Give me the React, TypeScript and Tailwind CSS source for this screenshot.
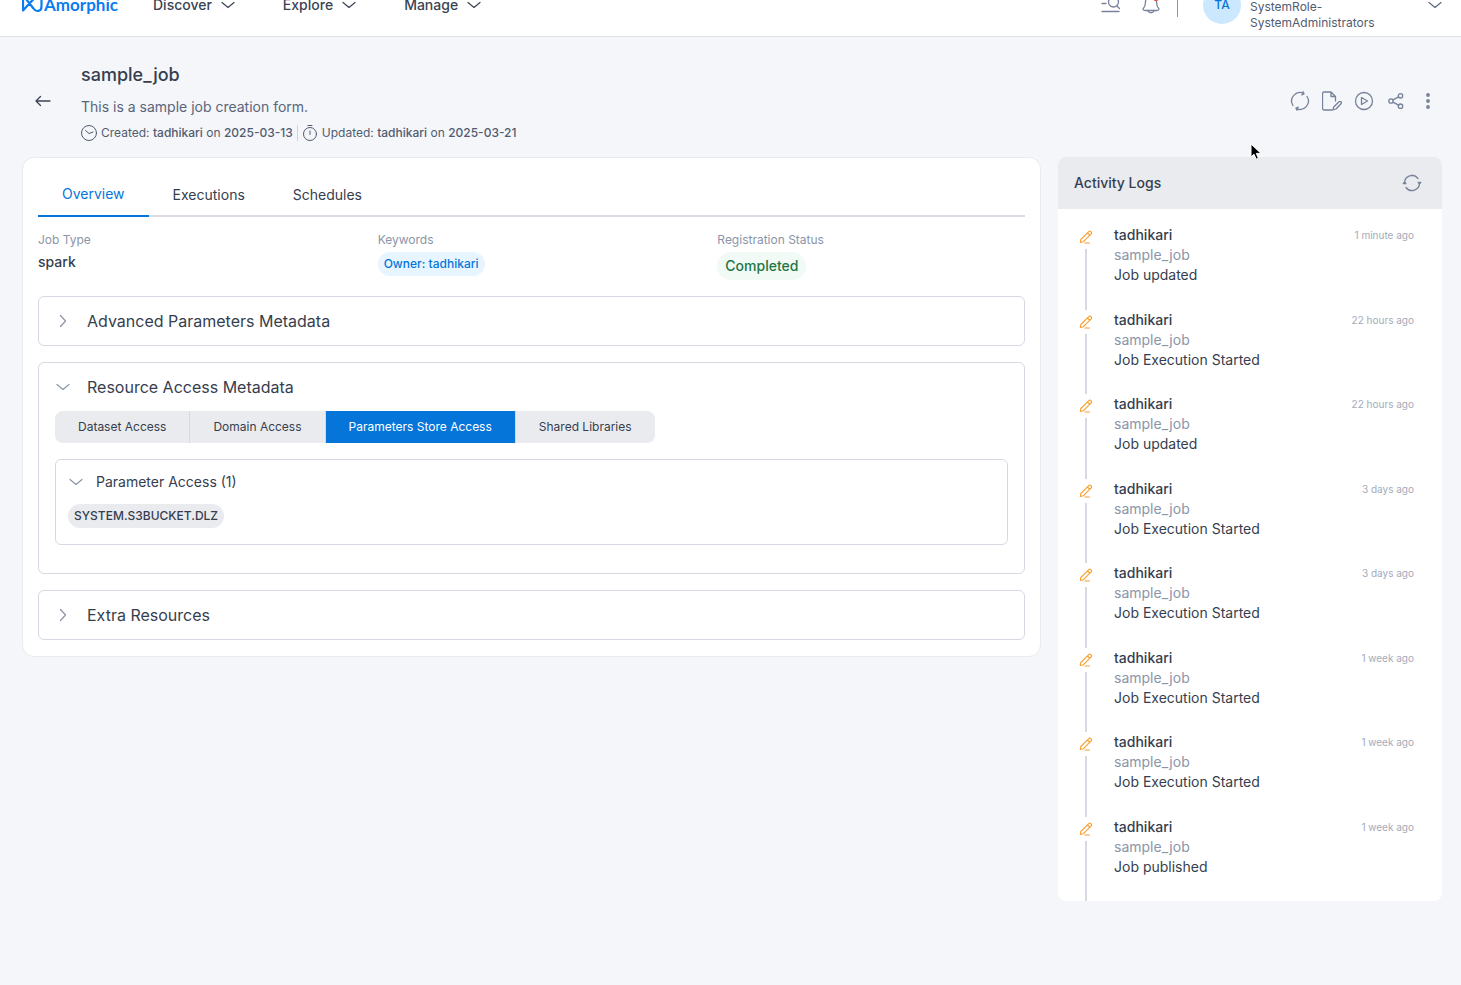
import { useState } from "react";
import type { ReactNode } from "react";

type IconProps = { className?: string; children: ReactNode; viewBox?: string; strokeWidth?: number };

function Icon({ className = "size-5", children, viewBox = "0 0 20 20", strokeWidth = 1 }: IconProps) {
    return (
        <svg
            className={className}
            viewBox={viewBox}
            fill="none"
            stroke="currentColor"
            strokeWidth={strokeWidth}
            strokeLinecap="round"
            strokeLinejoin="round"
            aria-hidden="true"
        >
            {children}
        </svg>
    );
}

function Chevron({ open = true, className = "text-[#8b95a9]" }: { open?: boolean; className?: string }) {
    return (
        <Icon className={`size-4 shrink-0 ${className}`} viewBox="0 0 16 16" strokeWidth={1.2}>
            {open ? <path d="M2 5.5l6 5 6-5" /> : <path d="M5.5 2.5l5 5.5-5 5.5" />}
        </Icon>
    );
}

const menus = ["Discover", "Explore", "Manage"];
const tabs = ["Overview", "Executions", "Schedules"];
const resources = ["Dataset Access", "Domain Access", "Parameters Store Access", "Shared Libraries"];

const logs = [
    { action: "Job updated", time: "1 minute ago" },
    { action: "Job Execution Started", time: "22 hours ago" },
    { action: "Job updated", time: "22 hours ago" },
    { action: "Job Execution Started", time: "3 days ago" },
    { action: "Job Execution Started", time: "3 days ago" },
    { action: "Job Execution Started", time: "1 week ago" },
    { action: "Job Execution Started", time: "1 week ago" },
    { action: "Job published", time: "1 week ago" },
];

function TopBar() {
    return (
        <header className="-mt-7 flex h-[65px] items-center border-b border-[#e1e3e8] bg-white pt-0.5 pr-[18px] pl-[22px]">
            <a href="#" className="flex w-[95px] items-center gap-px text-[#0a7cf0]">
                <svg className="h-5 w-[21px] shrink-0" viewBox="0 0 21 20" fill="none" stroke="currentColor" strokeWidth="2.2" strokeLinejoin="round" aria-hidden="true">
                    <path d="M1 4v11.500L12.500 3M4 4l7.500 9.500c2.500 4 8 3 8-2V3" />
                </svg>
                <span className="font-[Lato,sans-serif] text-[17px] leading-6 font-bold">Amorphic</span>
            </a>
            <nav className="ml-9 flex items-center gap-[47px]">
                {menus.map((menu) => (
                    <button key={menu} type="button" className="flex items-center gap-2 text-sm font-medium text-[#3b4353]">
                        {menu}
                        <Chevron className="text-[#3b4353]" />
                    </button>
                ))}
            </nav>
            <div className="ml-auto flex items-center">
                <button type="button" aria-label="Search" className="text-[#77829a]">
                    <Icon strokeWidth={1.3}>
                        <path d="M1 3h4M1 8.500h4M1 16.500h17" />
                        <circle cx="12.5" cy="7" r="5" />
                        <path d="M16 11l2.500 2.500" />
                    </Icon>
                </button>
                <button type="button" aria-label="Notifications" className="relative ml-5 text-[#77829a]">
                    <Icon strokeWidth={1.3}>
                        <path d="M10 1.500c-3.500 0-5.500 2.500-5.500 5.500 0 4-1 5.500-2.500 7 0 1 1 1.500 2 1.500h12c1 0 2-.500 2-1.500-1.500-1.500-2.500-3-2.500-7 0-3-2-5.500-5.500-5.500z" />
                        <path d="M7 15.500c.5 3 5.500 3 6 0" />
                    </Icon>
                    <span className="absolute top-0 right-0.5 size-1.5 rounded-full bg-[#f04438]" />
                </button>
                <span className="ml-4 h-6 w-px bg-[#8f98a8]" />
                <button type="button" className="ml-[25px] flex items-center text-left">
                    <span className="flex size-[38px] items-center justify-center rounded-full bg-[#cce8ff] text-xs font-medium text-[#0675d9]">TA</span>
                    <span className="ml-[9px] w-[177px] pt-5 text-xs leading-4 text-[#515c70]">
                        SystemRole-
                        <br />
                        SystemAdministrators
                    </span>
                    <Chevron className="text-[#5d687c]" />
                </button>
            </div>
        </header>
    );
}

function JobHeader() {
    return (
        <div className="flex items-center pr-1 pl-[13px]">
            <button type="button" aria-label="Back" className="text-[#3b4353]">
                <Icon className="size-4" viewBox="0 0 16 16" strokeWidth={1.3}>
                    <path d="M15 8H1M5.500 3.500L1 8l4.500 4.500" />
                </Icon>
            </button>
            <div className="ml-[30px]">
                <h1 className="text-lg leading-7 font-medium text-[#363e4e]">sample_job</h1>
                <p className="mt-2 text-sm leading-5 text-[#5a657a]">This is a sample job creation form.</p>
                <div className="mt-2 flex items-center text-xs leading-4 text-[#515c70]">
                    <Icon className="size-4" viewBox="0 0 16 16">
                        <circle cx="8" cy="8" r="7.5" />
                        <path d="M4.500 5.500L8 8.500l4-1.500" />
                    </Icon>
                    <span className="ml-1">
                        Created: <b className="font-medium">tadhikari</b> on <b className="font-medium">2025-03-13</b>
                    </span>
                    <span className="mx-1 h-4 w-px bg-[#cfd4dc]" />
                    <Icon className="size-4" viewBox="0 0 16 16">
                        <circle cx="8" cy="9" r="6.5" />
                        <path d="M6 .5h4M8 6v3.500" />
                    </Icon>
                    <span className="ml-1">
                        Updated: <b className="font-medium">tadhikari</b> on <b className="font-medium">2025-03-21</b>
                    </span>
                </div>
            </div>
            <div className="ml-auto flex items-center gap-3 text-[#77829a]">
                <button type="button" aria-label="Reload">
                    <Icon strokeWidth={1.3}>
                        <path d="M3 14.500A8.300 8.300 0 0 1 13.800 2.600M13 .800l1 2-2.200 1M17 5.500A8.300 8.300 0 0 1 6.200 17.400M7 19.200l-1-2 2.200-1" />
                    </Icon>
                </button>
                <button type="button" aria-label="Edit">
                    <Icon strokeWidth={1.3}>
                        <path d="M10 19H2a1.500 1.500 0 0 1-1.500-1.500v-15A1.500 1.500 0 0 1 2 1h7l4.500 4.500V10M9 1v4.500h4.500" />
                        <path d="M11 19l.7-3 5.300-5.300a1.300 1.300 0 0 1 2 2L14 18z" />
                    </Icon>
                </button>
                <button type="button" aria-label="Run">
                    <Icon strokeWidth={1.3}>
                        <circle cx="10" cy="10" r="8.5" />
                        <path d="M7.500 6.500v7l6-3.500z" />
                    </Icon>
                </button>
                <button type="button" aria-label="Share">
                    <Icon strokeWidth={1.3}>
                        <circle cx="5" cy="10" r="2.2" />
                        <circle cx="14.5" cy="4.8" r="2.2" />
                        <circle cx="14.5" cy="15.2" r="2.2" />
                        <path d="M7 8.900l5.600-3M7 11.100l5.600 3" />
                    </Icon>
                </button>
                <button type="button" aria-label="More">
                    <svg className="size-5" viewBox="0 0 20 20" fill="currentColor" aria-hidden="true">
                        <circle cx="10" cy="4" r="1.9" />
                        <circle cx="10" cy="10" r="1.9" />
                        <circle cx="10" cy="16" r="1.9" />
                    </svg>
                </button>
            </div>
        </div>
    );
}

function Section({ title, open = false, children }: { title: string; open?: boolean; children?: ReactNode }) {
    return (
        <section className="mt-4 rounded-md border border-[#d5d9e1]">
            <button type="button" aria-expanded={open} className="flex h-12 w-full items-center gap-4 px-4 text-base text-[#363e4e]">
                <Chevron open={open} />
                {title}
            </button>
            {children}
        </section>
    );
}

function JobDetails() {
    const [tab, setTab] = useState("Overview");
    const [resource, setResource] = useState("Parameters Store Access");

    return (
        <main className="min-w-0 flex-1 rounded-xl border border-[#e8eaef] bg-white px-[15px] pt-[15px] pb-4">
            <div role="tablist" className="flex border-b-2 border-[#d8dce3]">
                {tabs.map((name) => (
                    <button
                        key={name}
                        type="button"
                        role="tab"
                        aria-selected={tab === name}
                        onClick={() => setTab(name)}
                        className={`-mb-0.5 h-11 px-6 text-sm ${tab === name ? "border-b-2 border-[#0675d9] text-[#0675d9]" : "text-[#363e4e]"}`}
                    >
                        {name}
                    </button>
                ))}
            </div>

            <dl className="mt-[15px] grid grid-cols-3 gap-8">
                <div>
                    <dt className="text-xs leading-4 text-[#8b95a9]">Job Type</dt>
                    <dd className="mt-1 text-sm leading-5 font-medium text-[#363e4e]">spark</dd>
                </div>
                <div>
                    <dt className="text-xs leading-4 text-[#8b95a9]">Keywords</dt>
                    <dd className="mt-1">
                        <span className="block w-fit rounded-full bg-[#e6f5ff] px-1.5 text-xs leading-6 font-medium text-[#0675d9]">Owner: tadhikari</span>
                    </dd>
                </div>
                <div>
                    <dt className="text-xs leading-4 text-[#8b95a9]">Registration Status</dt>
                    <dd className="mt-1">
                        <span className="block w-fit rounded-full bg-[#f1faf5] px-2 text-sm leading-7 font-medium text-[#1d7644]">Completed</span>
                    </dd>
                </div>
            </dl>

            <Section title="Advanced Parameters Metadata" />

            <Section title="Resource Access Metadata" open>
                <div className="px-4 pb-7">
                    <div className="flex w-fit overflow-hidden rounded-lg">
                        {resources.map((name) => (
                            <button
                                key={name}
                                type="button"
                                aria-pressed={resource === name}
                                onClick={() => setResource(name)}
                                className={`h-8 border-r border-[#d5d9e1] px-[23px] text-xs last:border-r-0 ${resource === name ? "bg-[#0675d9] text-white" : "bg-[#eaebef] text-[#363e4e]"}`}
                            >
                                {name}
                            </button>
                        ))}
                    </div>
                    <div className="mt-4 rounded-md border border-[#d5d9e1] px-3 pb-4">
                        <button type="button" aria-expanded="true" className="flex h-11 w-full items-center gap-3 text-sm text-[#363e4e]">
                            <Chevron />
                            Parameter Access (1)
                        </button>
                        <span className="block w-fit rounded-full bg-[#eaebef] px-1.5 text-xs leading-6 font-medium text-[#363e4e]">SYSTEM.S3BUCKET.DLZ</span>
                    </div>
                </div>
            </Section>

            <Section title="Extra Resources" />
        </main>
    );
}

function ActivityLogs() {
    return (
        <aside className="w-96 shrink-0 overflow-hidden rounded-lg bg-white">
            <div className="flex h-[52px] items-center justify-between bg-[#eaebef] pr-5 pl-4">
                <h2 className="text-sm font-medium text-[#363e4e]">Activity Logs</h2>
                <button type="button" aria-label="Refresh logs" className="text-[#77829a]">
                    <Icon strokeWidth={1.3}>
                        <path d="M2.500 10a7.500 7.500 0 0 1 13.500-4.500M17.500 10a7.500 7.500 0 0 1-13.500 4.500M4.500 4.900A7.500 7.500 0 0 1 14 3.700M15.500 15.100A7.500 7.500 0 0 1 6 16.300" />
                        <path d="M1.300 10.500l1.300-1.300 1.300 1.300zM16.200 9.500l1.300 1.300L18.800 9.500z" fill="currentColor" />
                    </Icon>
                </button>
            </div>
            <ul className="flex min-h-[692px] flex-col pt-4 pr-7 pl-4">
                {logs.map((log, i) => (
                    <li key={i} className="flex flex-1 gap-4">
                        <div className="flex w-6 flex-col items-center">
                            <span className="flex size-6 items-center justify-center text-[#f79f2d]">
                                <Icon className="size-3.5" viewBox="0 0 14 14" strokeWidth={1.1}>
                                    <path d="M1.200 12.500l.6-3L9.800 1.600a1.300 1.300 0 0 1 2 0l.4.4a1.300 1.300 0 0 1 0 1.900L4.200 11.800zM8.500 3l2.300 2.300M6 13h4.500" />
                                </Icon>
                            </span>
                            <span className="w-0.5 flex-1 bg-[#d5d9e1]" />
                        </div>
                        <div className="flex-1 text-sm leading-5 text-[#363e4e]">
                            <p className="font-medium">tadhikari</p>
                            <p className="text-[#8b95a9]">sample_job</p>
                            <p>{log.action}</p>
                        </div>
                        <time className="text-[10px] leading-5 text-[#a3abba]">{log.time}</time>
                    </li>
                ))}
            </ul>
        </aside>
    );
}

export default function App() {
    return (
        <div className="min-h-screen overflow-hidden bg-[#f4f6fa] font-[Inter,sans-serif]">
            <TopBar />
            <div className="relative pt-6 pr-[19px] pl-[22px]">
                <JobHeader />
                <div className="mt-4 flex items-start gap-[17px]">
                    <JobDetails />
                    <ActivityLogs />
                </div>
                <svg className="absolute top-[106px] right-[199px] h-5 w-3" viewBox="0 0 12 20" aria-hidden="true">
                    <path d="M1 1v13l3-2.800 2.200 5 2.200-1-2.100-4.800H11z" fill="#000" stroke="#fff" strokeWidth="1" />
                </svg>
            </div>
        </div>
    );
}
